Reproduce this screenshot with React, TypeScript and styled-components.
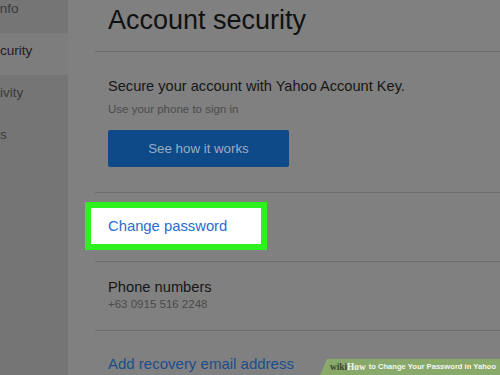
import React from "react";
import styled, { createGlobalStyle } from "styled-components";

const Global = createGlobalStyle`
  html, body { margin: 0; padding: 0; }
  body {
    width: 500px;
    height: 375px;
    overflow: hidden;
    background: #808080;
    font-family: "Liberation Sans", Arial, sans-serif;
  }
`;

const Page = styled.div`
  position: relative;
  display: flex;
  width: 500px;
  height: 375px;
  overflow: hidden;
  background: #808080;
`;

const Sidebar = styled.nav`
  flex: 0 0 68px;
  width: 68px;
  background: #757575;
  overflow: hidden;
  display: flex;
  flex-direction: column;
`;

const SideList = styled.div`
  margin-top: -9px;
  display: flex;
  flex-direction: column;
`;

const SideItem = styled.div<{ $active?: boolean; $shift: number }>`
  flex-shrink: 0;
  height: 42px;
  box-sizing: border-box;
  padding-top: 10px;
  background: ${(p) => (p.$active ? "#7d7d7d" : "transparent")};
  font-size: 13.5px;
  line-height: 16px;
  white-space: nowrap;
  color: ${(p) => (p.$active ? "#1e1e1e" : "#3a3a3a")};
  span {
    display: inline-block;
    margin-left: ${(p) => p.$shift}px;
  }
`;

const Main = styled.main`
  flex: 1;
  padding-left: 27px;
  display: flex;
  flex-direction: column;
`;

const Section = styled.section<{ $h: number; $pt?: number; $last?: boolean }>`
  flex-shrink: 0;
  height: ${(p) => p.$h}px;
  box-sizing: border-box;
  padding: ${(p) => p.$pt ?? 0}px 0 0 13px;
  border-bottom: ${(p) => (p.$last ? "none" : "1px solid #6c6c6c")};
  display: flex;
  flex-direction: column;
  align-items: flex-start;
`;

const Title = styled.h1`
  margin: 7px 0 0;
  font-size: 27px;
  line-height: 27px;
  font-weight: 400;
  color: #111;
`;

const Lead = styled.div<{ $size: number }>`
  font-size: ${(p) => p.$size}px;
  line-height: 18px;
  color: #161616;
`;

const Sub = styled.div<{ $mt: number }>`
  margin-top: ${(p) => p.$mt}px;
  font-size: 11.5px;
  line-height: 14px;
  color: #4b4b4b;
`;

const Button = styled.div`
  margin-top: 14px;
  width: 181px;
  height: 37px;
  border-radius: 2px;
  background: #0e4a88;
  color: #9eacc3;
  font-size: 13.3px;
  display: flex;
  align-items: center;
  justify-content: center;
`;

const Highlight = styled.div`
  margin: 9px 0 0 -23px;
  width: 182px;
  height: 48px;
  box-sizing: border-box;
  border: 6px solid #2ff01f;
  background: #ffffff;
  padding-left: 17px;
  display: flex;
  align-items: center;
`;

const Link = styled.span<{ $color: string; $size: number }>`
  font-size: ${(p) => p.$size}px;
  line-height: 18px;
  color: ${(p) => p.$color};
`;

const Banner = styled.div`
  position: absolute;
  right: 0;
  bottom: 0;
  width: 180px;
  height: 16px;
  background: #89a96a;
  clip-path: polygon(7px 0, 100% 0, 100% 100%, 0 100%);
  display: flex;
  align-items: flex-end;
  padding: 0 0 3px 10px;
  box-sizing: border-box;
  white-space: nowrap;
`;

const Wiki = styled.span<{ $light?: boolean }>`
  font-family: "Liberation Serif", "Times New Roman", serif;
  font-weight: 700;
  font-size: 9.3px;
  line-height: 10px;
  color: ${(p) => (p.$light ? "#f4f6ef" : "#3c4434")};
`;

const BannerText = styled.span`
  margin-left: 3px;
  font-weight: 700;
  font-size: 7.6px;
  line-height: 10px;
  color: #f4f6ef;
`;

export default function App() {
  return (
    <>
      <Global />
      <Page>
        <Sidebar>
          <SideList>
            <SideItem $shift={-4}>
              <span>Info</span>
            </SideItem>
            <SideItem $active $shift={-16.5}>
              <span>Security</span>
            </SideItem>
            <SideItem $shift={-19.5}>
              <span>Activity</span>
            </SideItem>
            <SideItem $shift={-66}>
              <span>Preferences</span>
            </SideItem>
          </SideList>
        </Sidebar>
        <Main>
          <Section $h={52}>
            <Title>Account security</Title>
          </Section>
          <Section $h={141} $pt={24.5}>
            <Lead $size={14.6}>Secure your account with Yahoo Account Key.</Lead>
            <Sub $mt={7.5}>Use your phone to sign in</Sub>
            <Button>See how it works</Button>
          </Section>
          <Section $h={69}>
            <Highlight>
              <Link $color="#2a6cce" $size={14.8}>
                Change password
              </Link>
            </Highlight>
          </Section>
          <Section $h={69} $pt={16}>
            <Lead $size={14.7}>Phone numbers</Lead>
            <Sub $mt={1}>+63 0915 516 2248</Sub>
          </Section>
          <Section $h={60} $pt={24} $last>
            <Link $color="#1c4e8c" $size={15}>
              Add recovery email address
            </Link>
          </Section>
        </Main>
        <Banner>
          <Wiki>wiki</Wiki>
          <Wiki $light>How</Wiki>
          <BannerText>to Change Your Password in Yahoo</BannerText>
        </Banner>
      </Page>
    </>
  );
}
